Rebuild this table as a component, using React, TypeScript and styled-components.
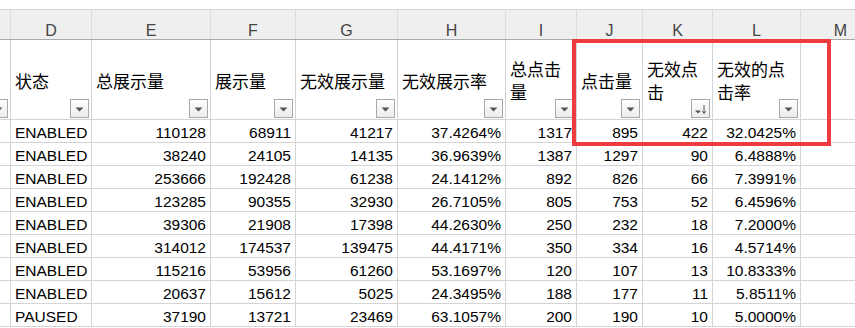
import React from "react";
import styled, { createGlobalStyle } from "styled-components";

const GlobalStyle = createGlobalStyle`
  html, body {
    margin: 0;
    padding: 0;
    background: #fff;
    overflow: hidden;
  }
`;

// column widths, right border included (C is only a sliver at the left)
const COLS = "11px 81px 119px 85px 102px 108px 71px 66px 70px 88px 80px";

const Sheet = styled.div`
  position: relative;
  width: 855px;
  height: 328px;
  overflow: hidden;
  padding-top: 9px;
  box-sizing: border-box;
  font-family: "Liberation Sans", "Noto Sans CJK SC", sans-serif;
  color: #000;
`;

const Row = styled.div`
  display: grid;
  grid-template-columns: ${COLS};
  width: max-content;
`;

const LetterBar = styled(Row)`
  background: #efefef;
  border-top: 1px solid #d5d5d5;
  border-bottom: 1px solid #a9a9a9;
`;

const Letter = styled.div`
  height: 29px;
  box-sizing: border-box;
  border-right: 1px solid #dcdcdc;
  display: flex;
  align-items: flex-end;
  justify-content: center;
  font-size: 16px;
  line-height: 16px;
  color: #444;
`;

const HeadCell = styled.div`
  position: relative;
  height: 80px;
  box-sizing: border-box;
  border-right: 1px solid #d4d4d4;
  border-bottom: 1px solid #d4d4d4;
  padding: 5px 3px 0 4px;
  display: flex;
  flex-direction: column;
  justify-content: center;
  overflow: hidden;
  font-size: 17px;
  line-height: 23px;
  white-space: nowrap;
`;

const FilterButton = styled.div`
  position: absolute;
  right: 2px;
  bottom: 1px;
  width: 19px;
  height: 19px;
  box-sizing: border-box;
  border: 1px solid #a8a8a8;
  background: linear-gradient(#ffffff, #ececec);
  display: flex;
  align-items: center;
  justify-content: center;
`;

const Cell = styled.div<{ $right?: boolean }>`
  height: 23px;
  box-sizing: border-box;
  border-right: 1px solid #d4d4d4;
  border-bottom: 1px solid #d4d4d4;
  display: flex;
  align-items: flex-end;
  justify-content: ${(p) => (p.$right ? "flex-end" : "flex-start")};
  padding: 0 4px 1px 4px;
  overflow: hidden;
  white-space: nowrap;
  font-size: 15.5px;
  line-height: 16px;
`;

const Highlight = styled.div`
  position: absolute;
  left: 572px;
  top: 39px;
  width: 259px;
  height: 107px;
  box-sizing: border-box;
  border: 4px solid #ee3b3f;
  pointer-events: none;
`;

const Arrow: React.FC<{ sorted?: boolean }> = ({ sorted }) =>
  sorted ? (
    <svg width="17" height="17" viewBox="0 0 17 17">
      <path d="M3 10.5h6l-3 3z" fill="#555" />
      <path d="M12 5v8" stroke="#555" strokeWidth="1" />
      <path d="M10.3 11.2 12 13.6 13.7 11.2" stroke="#555" strokeWidth="1" fill="none" />
    </svg>
  ) : (
    <svg width="17" height="17" viewBox="0 0 17 17">
      <path d="M4.5 7.5h8l-4 4z" fill="#555" />
    </svg>
  );

const letters = ["", "D", "E", "F", "G", "H", "I", "J", "K", "L", "M"];

const headers: (string[] | null)[] = [
  [""],
  ["状态"],
  ["总展示量"],
  ["展示量"],
  ["无效展示量"],
  ["无效展示率"],
  ["总点击", "量"],
  ["点击量"],
  ["无效点", "击"],
  ["无效的点", "击率"],
  null,
];

const rows: (string | number)[][] = [
  ["ENABLED", 110128, 68911, 41217, "37.4264%", 1317, 895, 422, "32.0425%"],
  ["ENABLED", 38240, 24105, 14135, "36.9639%", 1387, 1297, 90, "6.4888%"],
  ["ENABLED", 253666, 192428, 61238, "24.1412%", 892, 826, 66, "7.3991%"],
  ["ENABLED", 123285, 90355, 32930, "26.7105%", 805, 753, 52, "6.4596%"],
  ["ENABLED", 39306, 21908, 17398, "44.2630%", 250, 232, 18, "7.2000%"],
  ["ENABLED", 314012, 174537, 139475, "44.4171%", 350, 334, 16, "4.5714%"],
  ["ENABLED", 115216, 53956, 61260, "53.1697%", 120, 107, 13, "10.8333%"],
  ["ENABLED", 20637, 15612, 5025, "24.3495%", 188, 177, 11, "5.8511%"],
  ["PAUSED", 37190, 13721, 23469, "63.1057%", 200, 190, 10, "5.0000%"],
];

const App: React.FC = () => {
  return (
    <>
      <GlobalStyle />
      <Sheet>
        <LetterBar>
          {letters.map((l, i) => (
            <Letter key={i}>{l}</Letter>
          ))}
        </LetterBar>
        <Row>
          {headers.map((h, i) => (
            <HeadCell key={i}>
              {h && h.map((line, j) => <span key={j}>{line}</span>)}
              {h && (
                <FilterButton>
                  <Arrow sorted={i === 8} />
                </FilterButton>
              )}
            </HeadCell>
          ))}
        </Row>
        {rows.map((r, i) => (
          <Row key={i}>
            <Cell />
            {r.map((v, j) => (
              <Cell key={j} $right={j > 0}>
                {v}
              </Cell>
            ))}
            <Cell />
          </Row>
        ))}
        <Highlight />
      </Sheet>
    </>
  );
};

export default App;
